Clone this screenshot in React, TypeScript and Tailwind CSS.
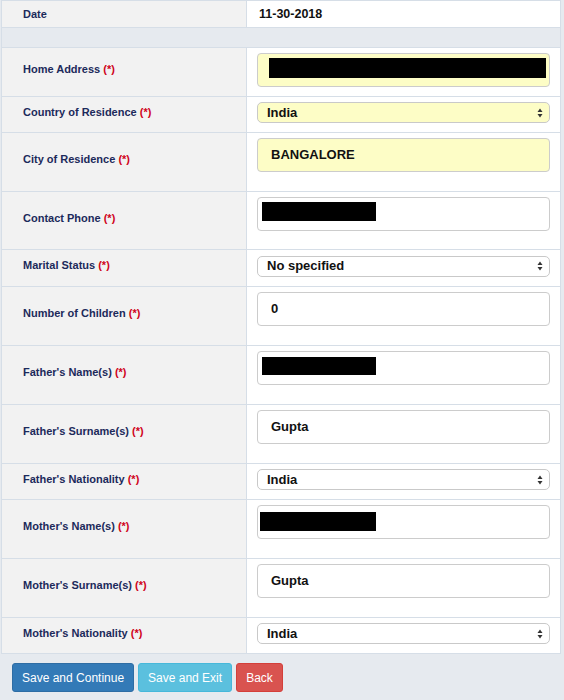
import React from 'react'

type Row = {
  label: string
  h: string
  kind: 'input' | 'select'
  value?: string
  yellow?: boolean
  redact?: string
}

const rows: Row[] = [
  { label: 'Home Address', h: 'h-[49px]', kind: 'input', yellow: true, redact: 'left-[11px] top-[4px] w-[277px] h-[20px]' },
  { label: 'Country of Residence', h: 'h-[36px]', kind: 'select', value: 'India', yellow: true },
  { label: 'City of Residence', h: 'h-[59px]', kind: 'input', value: 'BANGALORE', yellow: true },
  { label: 'Contact Phone', h: 'h-[58px]', kind: 'input', redact: 'left-[4px] top-[4px] w-[114px] h-[19px]' },
  { label: 'Marital Status', h: 'h-[37px]', kind: 'select', value: 'No specified' },
  { label: 'Number of Children', h: 'h-[59px]', kind: 'input', value: '0' },
  { label: "Father's Name(s)", h: 'h-[59px]', kind: 'input', redact: 'left-[4px] top-[5px] w-[114px] h-[18px]' },
  { label: "Father's Surname(s)", h: 'h-[59px]', kind: 'input', value: 'Gupta' },
  { label: "Father's Nationality", h: 'h-[36px]', kind: 'select', value: 'India' },
  { label: "Mother's Name(s)", h: 'h-[59px]', kind: 'input', redact: 'left-[2px] top-[6px] w-[116px] h-[19px]' },
  { label: "Mother's Surname(s)", h: 'h-[59px]', kind: 'input', value: 'Gupta' },
  { label: "Mother's Nationality", h: 'h-[36px]', kind: 'select', value: 'India' },
]

function Arrows() {
  return (
    <svg width="6" height="10" viewBox="0 0 6 10" className="absolute right-[6px] top-1/2 -translate-y-1/2">
      <path d="M3 0.5 L5.5 4 L0.5 4 Z" fill="#333" />
      <path d="M3 9.5 L5.5 6 L0.5 6 Z" fill="#333" />
    </svg>
  )
}

function Field({ row }: { row: Row }) {
  const bg = row.yellow ? 'bg-[#fdfdc6]' : 'bg-white'
  if (row.kind === 'select') {
    return (
      <div className="flex h-full items-center px-[10px] pb-[4px]">
        <div
          className={`relative flex h-[21px] w-full items-center rounded-[5px] border border-[#c9c9c9] ${bg} pl-[9px] text-[13px] font-bold text-[#111]`}
        >
          {row.value}
          <Arrows />
        </div>
      </div>
    )
  }
  return (
    <div className="flex h-full items-start px-[10px] pt-[5px]">
      <div
        className={`relative flex h-[34px] w-full items-center rounded-[4px] border border-[#cccccc] ${bg} pl-[13px] text-[13px] font-bold text-[#111]`}
      >
        {row.redact ? <div className={`absolute bg-black ${row.redact}`} /> : row.value}
      </div>
    </div>
  )
}

export default function App() {
  return (
    <div className="h-[700px] w-[564px] overflow-hidden bg-[#e6eaef] pl-[1px]" style={{ fontFamily: '"Liberation Sans", Arial, sans-serif' }}>
      <div className="w-[560px] border-x border-t border-[#d6dee7]">
        <div className="flex h-[27px] border-b border-[#d6dee7]">
          <div className="flex w-[245px] items-center border-r border-[#d6dee7] bg-[#f2f2f2] pl-[21px] text-[11px] font-bold text-[#1c2a5b]">
            Date
          </div>
          <div className="flex flex-1 items-center bg-white pl-[12px] text-[12.5px] font-bold text-[#111]">11-30-2018</div>
        </div>
        <div className="h-[20px] border-b border-[#d6dee7] bg-[#e6eaef]" />
        {rows.map((row) => (
          <div key={row.label} className={`flex ${row.h} border-b border-[#d6dee7]`}>
            <div className="flex w-[245px] items-center border-r border-[#d6dee7] bg-[#f2f2f2] pb-[5px] pl-[21px] text-[11px] font-bold text-[#1c2a5b]">
              {row.label}&nbsp;<span className="text-[#d0021b]">(*)</span>
            </div>
            <div className="flex-1 bg-white">
              <Field row={row} />
            </div>
          </div>
        ))}
      </div>
      <div className="flex gap-[4px] pl-[11px] pt-[9px]">
        <button className="h-[29px] rounded-[3px] border border-[#2e6da4] bg-[#337ab7] px-[9px] text-[12px] text-white">
          Save and Continue
        </button>
        <button className="h-[29px] rounded-[3px] border border-[#46b8da] bg-[#5bc0de] px-[9px] text-[12px] text-white">
          Save and Exit
        </button>
        <button className="h-[29px] rounded-[3px] border border-[#d43f3a] bg-[#d9534f] px-[9px] text-[12px] text-white">
          Back
        </button>
      </div>
    </div>
  )
}
